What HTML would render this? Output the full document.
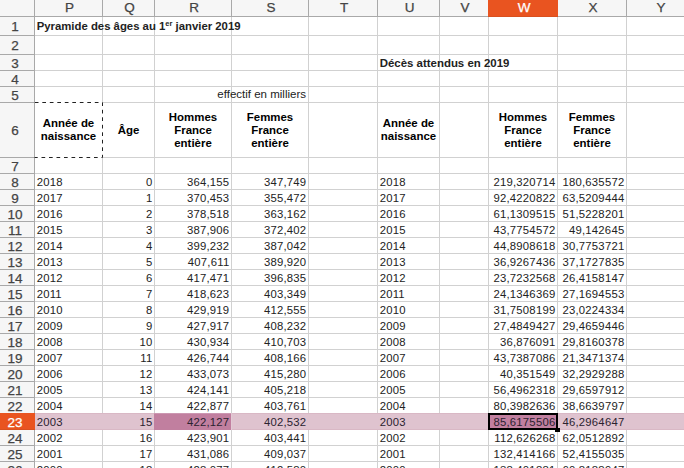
<!DOCTYPE html><html><head><meta charset="utf-8"><style>
*{margin:0;padding:0;box-sizing:border-box}
html,body{width:684px;height:468px;overflow:hidden;background:#fff}
body{position:relative;font-family:"Liberation Sans",sans-serif;color:#000}
.t{color:#222}
div{position:absolute}
.h{background:#a9a9a9}
.g{background:#d1d1d1}
.t{font-size:11.3px;letter-spacing:0.22px;line-height:15px;white-space:nowrap;height:15px}
.t.b{font-size:11.45px;letter-spacing:0}
.r{text-align:right}
.b{font-weight:bold}
.ch{-webkit-text-stroke:0.25px currentColor;font-size:13.5px;color:#444;text-align:center;line-height:16px;top:0;height:16px}
.rh{-webkit-text-stroke:0.25px currentColor;font-size:13.5px;color:#444;text-align:center;left:0;width:34px}
</style></head><body>

<div style="left:0;top:0;width:684px;height:16px;background:#f6f6f6"></div>
<div style="left:0;top:0;width:34px;height:468px;background:#f6f6f6"></div>
<div style="left:35px;top:413px;width:650px;height:17px;background:#dfc3cf"></div>
<div class="g" style="left:102px;top:17px;width:1px;height:451px"></div>
<div class="g" style="left:154px;top:17px;width:1px;height:451px"></div>
<div class="g" style="left:231px;top:17px;width:1px;height:451px"></div>
<div class="g" style="left:308px;top:17px;width:1px;height:451px"></div>
<div class="g" style="left:377px;top:17px;width:1px;height:451px"></div>
<div class="g" style="left:439px;top:17px;width:1px;height:451px"></div>
<div class="g" style="left:488px;top:17px;width:1px;height:451px"></div>
<div class="g" style="left:557px;top:17px;width:1px;height:451px"></div>
<div class="g" style="left:626px;top:17px;width:1px;height:451px"></div>
<div class="g" style="left:35px;top:35px;width:650px;height:1px"></div>
<div class="g" style="left:35px;top:54px;width:650px;height:1px"></div>
<div class="g" style="left:35px;top:70px;width:650px;height:1px"></div>
<div class="g" style="left:35px;top:86px;width:650px;height:1px"></div>
<div class="g" style="left:35px;top:102px;width:650px;height:1px"></div>
<div class="g" style="left:35px;top:157px;width:650px;height:1px"></div>
<div class="g" style="left:35px;top:173px;width:650px;height:1px"></div>
<div class="g" style="left:35px;top:189px;width:650px;height:1px"></div>
<div class="g" style="left:35px;top:205px;width:650px;height:1px"></div>
<div class="g" style="left:35px;top:221px;width:650px;height:1px"></div>
<div class="g" style="left:35px;top:237px;width:650px;height:1px"></div>
<div class="g" style="left:35px;top:253px;width:650px;height:1px"></div>
<div class="g" style="left:35px;top:269px;width:650px;height:1px"></div>
<div class="g" style="left:35px;top:285px;width:650px;height:1px"></div>
<div class="g" style="left:35px;top:301px;width:650px;height:1px"></div>
<div class="g" style="left:35px;top:317px;width:650px;height:1px"></div>
<div class="g" style="left:35px;top:333px;width:650px;height:1px"></div>
<div class="g" style="left:35px;top:349px;width:650px;height:1px"></div>
<div class="g" style="left:35px;top:365px;width:650px;height:1px"></div>
<div class="g" style="left:35px;top:381px;width:650px;height:1px"></div>
<div class="g" style="left:35px;top:397px;width:650px;height:1px"></div>
<div class="g" style="left:35px;top:413px;width:650px;height:1px"></div>
<div class="g" style="left:35px;top:429px;width:650px;height:1px"></div>
<div class="g" style="left:35px;top:445px;width:650px;height:1px"></div>
<div class="g" style="left:35px;top:461px;width:650px;height:1px"></div>
<div class="g" style="left:35px;top:477px;width:650px;height:1px"></div>
<div style="left:35px;top:413px;width:650px;height:17px;background:#dfc3cf"></div>
<div style="left:35px;top:413px;width:650px;height:1px;background:#d9b8c5"></div>
<div style="left:35px;top:429px;width:650px;height:1px;background:#d9b8c5"></div>
<div style="left:154px;top:413px;width:77px;height:17px;background:#c17f9f"></div>
<div style="left:154px;top:413px;width:77px;height:1px;background:#cc97b1"></div>
<div style="left:231px;top:413px;width:1px;height:17px;background:#e3cad5"></div>
<div class="h" style="left:0;top:16px;width:684px;height:1px"></div>
<div class="h" style="left:34px;top:0;width:1px;height:468px"></div>
<div class="h" style="left:102px;top:0;width:1px;height:16px"></div>
<div class="h" style="left:154px;top:0;width:1px;height:16px"></div>
<div class="h" style="left:231px;top:0;width:1px;height:16px"></div>
<div class="h" style="left:308px;top:0;width:1px;height:16px"></div>
<div class="h" style="left:377px;top:0;width:1px;height:16px"></div>
<div class="h" style="left:439px;top:0;width:1px;height:16px"></div>
<div class="h" style="left:488px;top:0;width:1px;height:16px"></div>
<div class="h" style="left:557px;top:0;width:1px;height:16px"></div>
<div class="h" style="left:626px;top:0;width:1px;height:16px"></div>
<div class="h" style="left:0;top:35px;width:34px;height:1px"></div>
<div class="h" style="left:0;top:54px;width:34px;height:1px"></div>
<div class="h" style="left:0;top:70px;width:34px;height:1px"></div>
<div class="h" style="left:0;top:86px;width:34px;height:1px"></div>
<div class="h" style="left:0;top:102px;width:34px;height:1px"></div>
<div class="h" style="left:0;top:157px;width:34px;height:1px"></div>
<div class="h" style="left:0;top:173px;width:34px;height:1px"></div>
<div class="h" style="left:0;top:189px;width:34px;height:1px"></div>
<div class="h" style="left:0;top:205px;width:34px;height:1px"></div>
<div class="h" style="left:0;top:221px;width:34px;height:1px"></div>
<div class="h" style="left:0;top:237px;width:34px;height:1px"></div>
<div class="h" style="left:0;top:253px;width:34px;height:1px"></div>
<div class="h" style="left:0;top:269px;width:34px;height:1px"></div>
<div class="h" style="left:0;top:285px;width:34px;height:1px"></div>
<div class="h" style="left:0;top:301px;width:34px;height:1px"></div>
<div class="h" style="left:0;top:317px;width:34px;height:1px"></div>
<div class="h" style="left:0;top:333px;width:34px;height:1px"></div>
<div class="h" style="left:0;top:349px;width:34px;height:1px"></div>
<div class="h" style="left:0;top:365px;width:34px;height:1px"></div>
<div class="h" style="left:0;top:381px;width:34px;height:1px"></div>
<div class="h" style="left:0;top:397px;width:34px;height:1px"></div>
<div class="h" style="left:0;top:413px;width:34px;height:1px"></div>
<div class="h" style="left:0;top:429px;width:34px;height:1px"></div>
<div class="h" style="left:0;top:445px;width:34px;height:1px"></div>
<div class="h" style="left:0;top:461px;width:34px;height:1px"></div>
<div class="h" style="left:0;top:477px;width:34px;height:1px"></div>
<div style="left:488px;top:0;width:70px;height:17px;background:#e95420"></div>
<div style="left:0;top:413px;width:35px;height:17px;background:#e95420"></div>
<div style="left:0;top:429px;width:35px;height:1px;background:#d9501f"></div>
<div style="left:488px;top:16px;width:70px;height:1px;background:#d9501f"></div>
<div class="ch" style="left:36px;width:67px;color:#444">P</div>
<div class="ch" style="left:104px;width:51px;color:#444">Q</div>
<div class="ch" style="left:156px;width:76px;color:#444">R</div>
<div class="ch" style="left:233px;width:76px;color:#444">S</div>
<div class="ch" style="left:310px;width:68px;color:#444">T</div>
<div class="ch" style="left:379px;width:61px;color:#444">U</div>
<div class="ch" style="left:441px;width:48px;color:#444">V</div>
<div class="ch" style="left:490px;width:68px;color:#fff">W</div>
<div class="ch" style="left:559px;width:68px;color:#444">X</div>
<div class="ch" style="left:628px;width:66px;color:#444">Y</div>
<div class="rh" style="top:18px;left:-2px;height:18px;line-height:18px;color:#444">1</div>
<div class="rh" style="top:37px;left:-2px;height:18px;line-height:18px;color:#444">2</div>
<div class="rh" style="top:56px;left:-2px;height:15px;line-height:15px;color:#444">3</div>
<div class="rh" style="top:72px;left:-2px;height:15px;line-height:15px;color:#444">4</div>
<div class="rh" style="top:88px;left:-2px;height:15px;line-height:15px;color:#444">5</div>
<div class="rh" style="top:104px;left:-2px;height:54px;line-height:54px;color:#444">6</div>
<div class="rh" style="top:159px;left:-2px;height:15px;line-height:15px;color:#444">7</div>
<div class="rh" style="top:175px;left:-2px;height:15px;line-height:15px;color:#444">8</div>
<div class="rh" style="top:191px;left:-2px;height:15px;line-height:15px;color:#444">9</div>
<div class="rh" style="top:207px;left:-2px;height:15px;line-height:15px;color:#444">10</div>
<div class="rh" style="top:223px;left:-2px;height:15px;line-height:15px;color:#444">11</div>
<div class="rh" style="top:239px;left:-2px;height:15px;line-height:15px;color:#444">12</div>
<div class="rh" style="top:255px;left:-2px;height:15px;line-height:15px;color:#444">13</div>
<div class="rh" style="top:271px;left:-2px;height:15px;line-height:15px;color:#444">14</div>
<div class="rh" style="top:287px;left:-2px;height:15px;line-height:15px;color:#444">15</div>
<div class="rh" style="top:303px;left:-2px;height:15px;line-height:15px;color:#444">16</div>
<div class="rh" style="top:319px;left:-2px;height:15px;line-height:15px;color:#444">17</div>
<div class="rh" style="top:335px;left:-2px;height:15px;line-height:15px;color:#444">18</div>
<div class="rh" style="top:351px;left:-2px;height:15px;line-height:15px;color:#444">19</div>
<div class="rh" style="top:367px;left:-2px;height:15px;line-height:15px;color:#444">20</div>
<div class="rh" style="top:383px;left:-2px;height:15px;line-height:15px;color:#444">21</div>
<div class="rh" style="top:399px;left:-2px;height:15px;line-height:15px;color:#444">22</div>
<div class="rh" style="top:415px;left:-2px;height:15px;line-height:15px;color:#fff">23</div>
<div class="rh" style="top:431px;left:-2px;height:15px;line-height:15px;color:#444">24</div>
<div class="rh" style="top:447px;left:-2px;height:15px;line-height:15px;color:#444">25</div>
<div class="rh" style="top:463px;left:-2px;height:15px;line-height:15px;color:#444">26</div>
<div class="t b" style="left:36.7px;top:17px;height:18px;line-height:18px;font-size:11.35px">Pyramide des âges au 1<span style="font-size:7.5px;vertical-align:4px;line-height:0">er</span> janvier 2019</div>
<div class="t b" style="left:379.7px;top:56px;height:15px;line-height:15px;">Décès attendus en 2019</div>
<div class="t" style="right:378px;top:87px;font-size:11.5px;letter-spacing:0">effectif en milliers</div>
<div class="b" style="left:35px;width:67px;top:117.0px;font-size:11.45px;line-height:13px;text-align:center;white-space:nowrap">Année de<br>naissance</div>
<div class="b" style="left:103px;width:51px;top:123.5px;font-size:11.45px;line-height:13px;text-align:center;white-space:nowrap">Âge</div>
<div class="b" style="left:155px;width:76px;top:110.5px;font-size:11.45px;line-height:13px;text-align:center;white-space:nowrap">Hommes<br>France<br>entière</div>
<div class="b" style="left:232px;width:76px;top:110.5px;font-size:11.45px;line-height:13px;text-align:center;white-space:nowrap">Femmes<br>France<br>entière</div>
<div class="b" style="left:378px;width:61px;top:117.0px;font-size:11.45px;line-height:13px;text-align:center;white-space:nowrap">Année de<br>naissance</div>
<div class="b" style="left:489px;width:68px;top:110.5px;font-size:11.45px;line-height:13px;text-align:center;white-space:nowrap">Hommes<br>France<br>entière</div>
<div class="b" style="left:558px;width:68px;top:110.5px;font-size:11.45px;line-height:13px;text-align:center;white-space:nowrap">Femmes<br>France<br>entière</div>
<div class="t" style="left:36.7px;top:175px;height:15px;line-height:15px;">2018</div>
<div class="t r" style="left:103px;width:49.4px;top:175px;height:15px;line-height:15px;">0</div>
<div class="t r" style="left:155px;width:74.4px;top:175px;height:15px;line-height:15px;">364,155</div>
<div class="t r" style="left:232px;width:74.4px;top:175px;height:15px;line-height:15px;">347,749</div>
<div class="t" style="left:379.7px;top:175px;height:15px;line-height:15px;">2018</div>
<div class="t r" style="left:489px;width:66.4px;top:175px;height:15px;line-height:15px;">219,320714</div>
<div class="t r" style="left:558px;width:66.4px;top:175px;height:15px;line-height:15px;">180,635572</div>
<div class="t" style="left:36.7px;top:191px;height:15px;line-height:15px;">2017</div>
<div class="t r" style="left:103px;width:49.4px;top:191px;height:15px;line-height:15px;">1</div>
<div class="t r" style="left:155px;width:74.4px;top:191px;height:15px;line-height:15px;">370,453</div>
<div class="t r" style="left:232px;width:74.4px;top:191px;height:15px;line-height:15px;">355,472</div>
<div class="t" style="left:379.7px;top:191px;height:15px;line-height:15px;">2017</div>
<div class="t r" style="left:489px;width:66.4px;top:191px;height:15px;line-height:15px;">92,4220822</div>
<div class="t r" style="left:558px;width:66.4px;top:191px;height:15px;line-height:15px;">63,5209444</div>
<div class="t" style="left:36.7px;top:207px;height:15px;line-height:15px;">2016</div>
<div class="t r" style="left:103px;width:49.4px;top:207px;height:15px;line-height:15px;">2</div>
<div class="t r" style="left:155px;width:74.4px;top:207px;height:15px;line-height:15px;">378,518</div>
<div class="t r" style="left:232px;width:74.4px;top:207px;height:15px;line-height:15px;">363,162</div>
<div class="t" style="left:379.7px;top:207px;height:15px;line-height:15px;">2016</div>
<div class="t r" style="left:489px;width:66.4px;top:207px;height:15px;line-height:15px;">61,1309515</div>
<div class="t r" style="left:558px;width:66.4px;top:207px;height:15px;line-height:15px;">51,5228201</div>
<div class="t" style="left:36.7px;top:223px;height:15px;line-height:15px;">2015</div>
<div class="t r" style="left:103px;width:49.4px;top:223px;height:15px;line-height:15px;">3</div>
<div class="t r" style="left:155px;width:74.4px;top:223px;height:15px;line-height:15px;">387,906</div>
<div class="t r" style="left:232px;width:74.4px;top:223px;height:15px;line-height:15px;">372,402</div>
<div class="t" style="left:379.7px;top:223px;height:15px;line-height:15px;">2015</div>
<div class="t r" style="left:489px;width:66.4px;top:223px;height:15px;line-height:15px;">43,7754572</div>
<div class="t r" style="left:558px;width:66.4px;top:223px;height:15px;line-height:15px;">49,142645</div>
<div class="t" style="left:36.7px;top:239px;height:15px;line-height:15px;">2014</div>
<div class="t r" style="left:103px;width:49.4px;top:239px;height:15px;line-height:15px;">4</div>
<div class="t r" style="left:155px;width:74.4px;top:239px;height:15px;line-height:15px;">399,232</div>
<div class="t r" style="left:232px;width:74.4px;top:239px;height:15px;line-height:15px;">387,042</div>
<div class="t" style="left:379.7px;top:239px;height:15px;line-height:15px;">2014</div>
<div class="t r" style="left:489px;width:66.4px;top:239px;height:15px;line-height:15px;">44,8908618</div>
<div class="t r" style="left:558px;width:66.4px;top:239px;height:15px;line-height:15px;">30,7753721</div>
<div class="t" style="left:36.7px;top:255px;height:15px;line-height:15px;">2013</div>
<div class="t r" style="left:103px;width:49.4px;top:255px;height:15px;line-height:15px;">5</div>
<div class="t r" style="left:155px;width:74.4px;top:255px;height:15px;line-height:15px;">407,611</div>
<div class="t r" style="left:232px;width:74.4px;top:255px;height:15px;line-height:15px;">389,920</div>
<div class="t" style="left:379.7px;top:255px;height:15px;line-height:15px;">2013</div>
<div class="t r" style="left:489px;width:66.4px;top:255px;height:15px;line-height:15px;">36,9267436</div>
<div class="t r" style="left:558px;width:66.4px;top:255px;height:15px;line-height:15px;">37,1727835</div>
<div class="t" style="left:36.7px;top:271px;height:15px;line-height:15px;">2012</div>
<div class="t r" style="left:103px;width:49.4px;top:271px;height:15px;line-height:15px;">6</div>
<div class="t r" style="left:155px;width:74.4px;top:271px;height:15px;line-height:15px;">417,471</div>
<div class="t r" style="left:232px;width:74.4px;top:271px;height:15px;line-height:15px;">396,835</div>
<div class="t" style="left:379.7px;top:271px;height:15px;line-height:15px;">2012</div>
<div class="t r" style="left:489px;width:66.4px;top:271px;height:15px;line-height:15px;">23,7232568</div>
<div class="t r" style="left:558px;width:66.4px;top:271px;height:15px;line-height:15px;">26,4158147</div>
<div class="t" style="left:36.7px;top:287px;height:15px;line-height:15px;">2011</div>
<div class="t r" style="left:103px;width:49.4px;top:287px;height:15px;line-height:15px;">7</div>
<div class="t r" style="left:155px;width:74.4px;top:287px;height:15px;line-height:15px;">418,623</div>
<div class="t r" style="left:232px;width:74.4px;top:287px;height:15px;line-height:15px;">403,349</div>
<div class="t" style="left:379.7px;top:287px;height:15px;line-height:15px;">2011</div>
<div class="t r" style="left:489px;width:66.4px;top:287px;height:15px;line-height:15px;">24,1346369</div>
<div class="t r" style="left:558px;width:66.4px;top:287px;height:15px;line-height:15px;">27,1694553</div>
<div class="t" style="left:36.7px;top:303px;height:15px;line-height:15px;">2010</div>
<div class="t r" style="left:103px;width:49.4px;top:303px;height:15px;line-height:15px;">8</div>
<div class="t r" style="left:155px;width:74.4px;top:303px;height:15px;line-height:15px;">429,919</div>
<div class="t r" style="left:232px;width:74.4px;top:303px;height:15px;line-height:15px;">412,555</div>
<div class="t" style="left:379.7px;top:303px;height:15px;line-height:15px;">2010</div>
<div class="t r" style="left:489px;width:66.4px;top:303px;height:15px;line-height:15px;">31,7508199</div>
<div class="t r" style="left:558px;width:66.4px;top:303px;height:15px;line-height:15px;">23,0224334</div>
<div class="t" style="left:36.7px;top:319px;height:15px;line-height:15px;">2009</div>
<div class="t r" style="left:103px;width:49.4px;top:319px;height:15px;line-height:15px;">9</div>
<div class="t r" style="left:155px;width:74.4px;top:319px;height:15px;line-height:15px;">427,917</div>
<div class="t r" style="left:232px;width:74.4px;top:319px;height:15px;line-height:15px;">408,232</div>
<div class="t" style="left:379.7px;top:319px;height:15px;line-height:15px;">2009</div>
<div class="t r" style="left:489px;width:66.4px;top:319px;height:15px;line-height:15px;">27,4849427</div>
<div class="t r" style="left:558px;width:66.4px;top:319px;height:15px;line-height:15px;">29,4659446</div>
<div class="t" style="left:36.7px;top:335px;height:15px;line-height:15px;">2008</div>
<div class="t r" style="left:103px;width:49.4px;top:335px;height:15px;line-height:15px;">10</div>
<div class="t r" style="left:155px;width:74.4px;top:335px;height:15px;line-height:15px;">430,934</div>
<div class="t r" style="left:232px;width:74.4px;top:335px;height:15px;line-height:15px;">410,703</div>
<div class="t" style="left:379.7px;top:335px;height:15px;line-height:15px;">2008</div>
<div class="t r" style="left:489px;width:66.4px;top:335px;height:15px;line-height:15px;">36,876091</div>
<div class="t r" style="left:558px;width:66.4px;top:335px;height:15px;line-height:15px;">29,8160378</div>
<div class="t" style="left:36.7px;top:351px;height:15px;line-height:15px;">2007</div>
<div class="t r" style="left:103px;width:49.4px;top:351px;height:15px;line-height:15px;">11</div>
<div class="t r" style="left:155px;width:74.4px;top:351px;height:15px;line-height:15px;">426,744</div>
<div class="t r" style="left:232px;width:74.4px;top:351px;height:15px;line-height:15px;">408,166</div>
<div class="t" style="left:379.7px;top:351px;height:15px;line-height:15px;">2007</div>
<div class="t r" style="left:489px;width:66.4px;top:351px;height:15px;line-height:15px;">43,7387086</div>
<div class="t r" style="left:558px;width:66.4px;top:351px;height:15px;line-height:15px;">21,3471374</div>
<div class="t" style="left:36.7px;top:367px;height:15px;line-height:15px;">2006</div>
<div class="t r" style="left:103px;width:49.4px;top:367px;height:15px;line-height:15px;">12</div>
<div class="t r" style="left:155px;width:74.4px;top:367px;height:15px;line-height:15px;">433,073</div>
<div class="t r" style="left:232px;width:74.4px;top:367px;height:15px;line-height:15px;">415,280</div>
<div class="t" style="left:379.7px;top:367px;height:15px;line-height:15px;">2006</div>
<div class="t r" style="left:489px;width:66.4px;top:367px;height:15px;line-height:15px;">40,351549</div>
<div class="t r" style="left:558px;width:66.4px;top:367px;height:15px;line-height:15px;">32,2929288</div>
<div class="t" style="left:36.7px;top:383px;height:15px;line-height:15px;">2005</div>
<div class="t r" style="left:103px;width:49.4px;top:383px;height:15px;line-height:15px;">13</div>
<div class="t r" style="left:155px;width:74.4px;top:383px;height:15px;line-height:15px;">424,141</div>
<div class="t r" style="left:232px;width:74.4px;top:383px;height:15px;line-height:15px;">405,218</div>
<div class="t" style="left:379.7px;top:383px;height:15px;line-height:15px;">2005</div>
<div class="t r" style="left:489px;width:66.4px;top:383px;height:15px;line-height:15px;">56,4962318</div>
<div class="t r" style="left:558px;width:66.4px;top:383px;height:15px;line-height:15px;">29,6597912</div>
<div class="t" style="left:36.7px;top:399px;height:15px;line-height:15px;">2004</div>
<div class="t r" style="left:103px;width:49.4px;top:399px;height:15px;line-height:15px;">14</div>
<div class="t r" style="left:155px;width:74.4px;top:399px;height:15px;line-height:15px;">422,877</div>
<div class="t r" style="left:232px;width:74.4px;top:399px;height:15px;line-height:15px;">403,761</div>
<div class="t" style="left:379.7px;top:399px;height:15px;line-height:15px;">2004</div>
<div class="t r" style="left:489px;width:66.4px;top:399px;height:15px;line-height:15px;">80,3982636</div>
<div class="t r" style="left:558px;width:66.4px;top:399px;height:15px;line-height:15px;">38,6639797</div>
<div class="t" style="left:36.7px;top:415px;height:15px;line-height:15px;color:#2b2230;">2003</div>
<div class="t r" style="left:103px;width:49.4px;top:415px;height:15px;line-height:15px;color:#2b2230;">15</div>
<div class="t r" style="left:155px;width:74.4px;top:415px;height:15px;line-height:15px;color:#2b2230;">422,127</div>
<div class="t r" style="left:232px;width:74.4px;top:415px;height:15px;line-height:15px;color:#2b2230;">402,532</div>
<div class="t" style="left:379.7px;top:415px;height:15px;line-height:15px;color:#2b2230;">2003</div>
<div class="t r" style="left:489px;width:66.4px;top:415px;height:15px;line-height:15px;color:#2b2230;">85,6175506</div>
<div class="t r" style="left:558px;width:66.4px;top:415px;height:15px;line-height:15px;color:#2b2230;">46,2964647</div>
<div class="t" style="left:36.7px;top:431px;height:15px;line-height:15px;">2002</div>
<div class="t r" style="left:103px;width:49.4px;top:431px;height:15px;line-height:15px;">16</div>
<div class="t r" style="left:155px;width:74.4px;top:431px;height:15px;line-height:15px;">423,901</div>
<div class="t r" style="left:232px;width:74.4px;top:431px;height:15px;line-height:15px;">403,441</div>
<div class="t" style="left:379.7px;top:431px;height:15px;line-height:15px;">2002</div>
<div class="t r" style="left:489px;width:66.4px;top:431px;height:15px;line-height:15px;">112,626268</div>
<div class="t r" style="left:558px;width:66.4px;top:431px;height:15px;line-height:15px;">62,0512892</div>
<div class="t" style="left:36.7px;top:447px;height:15px;line-height:15px;">2001</div>
<div class="t r" style="left:103px;width:49.4px;top:447px;height:15px;line-height:15px;">17</div>
<div class="t r" style="left:155px;width:74.4px;top:447px;height:15px;line-height:15px;">431,086</div>
<div class="t r" style="left:232px;width:74.4px;top:447px;height:15px;line-height:15px;">409,037</div>
<div class="t" style="left:379.7px;top:447px;height:15px;line-height:15px;">2001</div>
<div class="t r" style="left:489px;width:66.4px;top:447px;height:15px;line-height:15px;">132,414166</div>
<div class="t r" style="left:558px;width:66.4px;top:447px;height:15px;line-height:15px;">52,4155035</div>
<div class="t" style="left:36.7px;top:463px;height:15px;line-height:15px;">2000</div>
<div class="t r" style="left:103px;width:49.4px;top:463px;height:15px;line-height:15px;">18</div>
<div class="t r" style="left:155px;width:74.4px;top:463px;height:15px;line-height:15px;">428,077</div>
<div class="t r" style="left:232px;width:74.4px;top:463px;height:15px;line-height:15px;">412,580</div>
<div class="t" style="left:379.7px;top:463px;height:15px;line-height:15px;">2000</div>
<div class="t r" style="left:489px;width:66.4px;top:463px;height:15px;line-height:15px;">138,401881</div>
<div class="t r" style="left:558px;width:66.4px;top:463px;height:15px;line-height:15px;">60,8188947</div>
<div style="left:488px;top:413px;width:70px;height:17px;border:2px solid #000;background:#c17f9f"></div>
<div class="t r" style="left:489px;width:66.4px;top:415px;height:15px;line-height:15px;color:#2b2230;">85,6175506</div>
<div style="left:555px;top:428px;width:5px;height:4px;background:#000"></div>
<svg style="position:absolute;left:0;top:0" width="684" height="468"><g stroke="#fff" stroke-width="1" fill="none"><line x1="35" y1="102.5" x2="102" y2="102.5"/><line x1="35" y1="157.5" x2="102" y2="157.5"/><line x1="102.5" y1="103" x2="102.5" y2="157"/></g><path d="M34.8 102.5H102.5V157.5H34.5" stroke="#222" stroke-width="1" fill="none" stroke-dasharray="3.7 3.8"/></svg>
</body></html>
